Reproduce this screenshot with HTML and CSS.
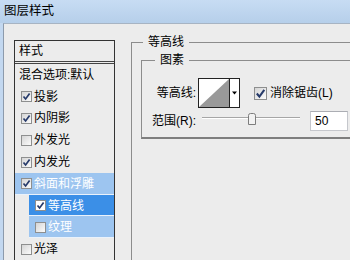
FILE: index.html
```html
<!DOCTYPE html>
<html lang="zh-CN">
<head>
    <meta charset="UTF-8">
    <title>图层样式</title>
    <link rel="stylesheet" href="styles.css">
</head>
<body>
    <div class="titlebar">图层样式</div>

    <div class="frame">
        <div class="client">
            <!-- lista de efeitos -->
            <div class="styles-list">
                <div class="list-head">样式</div>
                <div class="list-row plain">混合选项:默认</div>
                <div class="list-row"><span class="cb"><svg viewBox="0 0 9 9"><path d="M1.5 4.5 L3.6 7 L7.6 1.6"/></svg></span>投影</div>
                <div class="list-row"><span class="cb"><svg viewBox="0 0 9 9"><path d="M1.5 4.5 L3.6 7 L7.6 1.6"/></svg></span>内阴影</div>
                <div class="list-row"><span class="cb"></span>外发光</div>
                <div class="list-row"><span class="cb"><svg viewBox="0 0 9 9"><path d="M1.5 4.5 L3.6 7 L7.6 1.6"/></svg></span>内发光</div>
                <div class="list-row sel"><span class="cb"><svg viewBox="0 0 9 9"><path d="M1.5 4.5 L3.6 7 L7.6 1.6"/></svg></span>斜面和浮雕</div>
                <div class="list-row sub active"><span class="cb"><svg viewBox="0 0 9 9"><path d="M1.5 4.5 L3.6 7 L7.6 1.6"/></svg></span>等高线</div>
                <div class="list-row sub sel"><span class="cb"></span>纹理</div>
                <div class="list-row"><span class="cb"></span>光泽</div>
            </div>

            <div class="panel">
                <fieldset class="group outer">
                    <legend>等高线</legend>
                    <fieldset class="group inner">
                        <legend>图素</legend>
                        <div class="field first">
                            <span class="field-label">等高线:</span>
                            <div class="curve">
                                <svg width="40" height="28" viewBox="0 0 40 28">
                                    <rect x="0" y="0" width="40" height="28" fill="#fff"/>
                                    <polygon points="0,28 30,0 30,28" fill="#999"/>
                                    <line x1="30.5" y1="0" x2="30.5" y2="28" stroke="#222"/>
                                    <polygon points="33,12.5 38,12.5 35.5,15.5" fill="#000"/>
                                </svg>
                            </div>
                            <span class="cb big"><svg viewBox="0 0 9 9"><path d="M1.5 4.5 L3.6 7 L7.6 1.6"/></svg></span>
                            <span class="check-label">消除锯齿(L)</span>
                        </div>
                        <div class="field">
                            <span class="field-label">范围(R):</span>
                            <svg class="slider" width="98" height="20" viewBox="0 0 98 20">
                                <line x1="0" y1="6.5" x2="98" y2="6.5" stroke="#a6a6a6"/>
                                <line x1="0" y1="7.5" x2="98" y2="7.5" stroke="#fff"/>
                                <path d="M46.5 13.5 V4.5 Q46.5 2.5 48.5 2.5 H51.5 Q53.5 2.5 53.5 4.5 V13.5 Z" fill="#f2f2f2" stroke="#7d7d7d"/>
                            </svg>
                            <div class="num">50</div>
                        </div>
                    </fieldset>
                </fieldset>
            </div>
        </div>
    </div>
</body>
</html>
```

FILE: styles.css
```css
body {
    margin: 0;
    width: 350px;
    height: 260px;
    overflow: hidden;
    background-color: #ececec;
    font-family: "Liberation Sans", "Noto Sans CJK SC", sans-serif;
    font-size: 12px;
    line-height: 16px;
    color: #000;
}

.titlebar {
    height: 23px;
    padding-left: 4px;
    line-height: 22px;
    font-size: 12.5px;
    background: linear-gradient(#c7dcf3, #b6cfea);
}

.frame {
    display: flex;
    height: 237px;
    border-left: 3px solid #c3d8f0;
}

.client {
    flex: 1;
    display: flex;
    overflow: hidden;
    border-left: 1px solid #8d9bac;
    border-top: 1px solid #a7b4c3;
}

/* lista da esquerda */
.styles-list {
    box-sizing: border-box;
    width: 101px;
    margin: 16px 0 0 10px;
    border: 1px solid #333;
    border-bottom: none;
    display: flex;
    flex-direction: column;
}

.list-head {
    height: 20px;
    line-height: 20px;
    padding-left: 4px;
    border-bottom: 3px double #444;
}

.list-row {
    height: 22px;
    display: flex;
    align-items: center;
    padding-left: 6px;
}

.list-row.plain {
    padding-left: 4px;
}

.list-row.sub {
    margin-left: 14px;
}

.list-row.sel {
    background-color: #9dc5f0;
    color: #fff;
    box-shadow: inset 0 -1px 0 #eaf2fb;
}

.list-row.active {
    background-color: #3b8fe7;
    color: #fff;
    box-shadow: inset 0 -1px 0 #eaf2fb;
}

.cb {
    box-sizing: border-box;
    width: 11px;
    height: 11px;
    margin-right: 2px;
    border: 1px solid #8e8f8f;
    background: linear-gradient(135deg, #d5d5d5, #fbfbfb);
    display: flex;
}

.cb svg {
    width: 9px;
    height: 9px;
    fill: none;
    stroke: #263a6a;
    stroke-width: 1.7;
}

.list-row.active .cb {
    background: #fff;
}

.cb.big {
    width: 13px;
    height: 13px;
    margin-left: 14px;
    margin-right: 3px;
}

.cb.big svg {
    width: 11px;
    height: 11px;
}

/* painel da direita */
.panel {
    flex: 1;
    margin-left: 16px;
    padding-top: 10px;
}

.group {
    margin: 0;
    padding: 0;
    min-width: 0;
    border: 1px solid #8c8c8c;
    border-right: none;
}

.group legend {
    padding: 0 5px;
    line-height: 16px;
}

.outer {
    height: 260px;
    padding-left: 9px;
    border-bottom: none;
}

.outer legend {
    margin-left: 2px;
}

.inner {
    margin-top: 2px;
    padding-bottom: 6px;
    border-bottom: 2px solid #7e7e7e;
}

.inner legend {
    margin-left: 13px;
}

.field {
    display: flex;
    align-items: center;
    margin-top: 3px;
}

.field.first {
    margin-top: 10px;
}

.field-label {
    width: 54px;
    text-align: right;
}

.curve {
    margin-left: 2px;
    width: 40px;
    height: 28px;
    border: 1px solid #222;
}

.curve svg {
    display: block;
}

.slider {
    display: block;
    margin-left: 6px;
}

.num {
    box-sizing: border-box;
    width: 38px;
    height: 20px;
    margin-left: 10px;
    padding-left: 4px;
    line-height: 18px;
    background-color: #fff;
    border: 1px solid #c5c7cc;
    border-top-color: #abadb3;
}
```
